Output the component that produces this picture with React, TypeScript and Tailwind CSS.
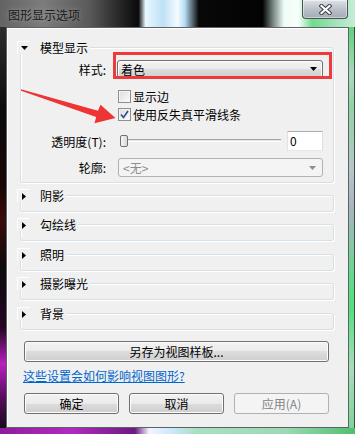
import React from 'react';

const btn =
  'flex items-center justify-center rounded-[3px] border border-[#707070] bg-[linear-gradient(#f2f2f2_0%,#ebebeb_50%,#dddddd_50%,#cfcfcf_100%)] shadow-[inset_0_0_0_1px_#fcfcfc] text-[12px] leading-[13px]';

const Tri = ({ open, color = '#000' }: { open: boolean; color?: string }) =>
  open ? (
    <svg width="7" height="4" viewBox="0 0 7 4">
      <polygon points="0,0 7,0 3.5,4" fill={color} />
    </svg>
  ) : (
    <svg width="4" height="7" viewBox="0 0 4 7">
      <polygon points="0,0 4,3.5 0,7" fill={color} />
    </svg>
  );

const Section = ({
  title,
  open = false,
  children,
  className = '',
}: {
  title: string;
  open?: boolean;
  children?: React.ReactNode;
  className?: string;
}) => (
  <div className={`flex flex-col ${className}`}>
    <div className="relative z-10 flex h-[13px] items-center self-start bg-[#f0f0f0] pr-[2px]">
      <div className="flex h-[13px] w-[13px] items-center justify-center border-l border-t border-white">
        <Tri open={open} />
      </div>
      <span className="ml-[10px] text-[12px] leading-[13px]">{title}</span>
    </div>
    <div
      className={`relative ml-[3px] -mt-[7px] rounded-[3px] border border-[#d5dfe5] shadow-[inset_1px_1px_0_#fff,1px_1px_0_#fff] ${
        open ? '' : 'h-[17px]'
      }`}
    >
      {children}
    </div>
  </div>
);

const Check = ({ checked }: { checked?: boolean }) => (
  <div className="flex h-[13px] w-[13px] items-center justify-center border border-[#8e8f8f] bg-[linear-gradient(135deg,#dcdcdc,#fdfdfd)] shadow-[inset_0_0_0_1px_#f4f4f4]">
    {checked && (
      <svg width="9" height="9" viewBox="0 0 9 9">
        <path d="M1 4.5 L3.5 7.5 L8 1" fill="none" stroke="#2b4a8f" strokeWidth="1.6" />
      </svg>
    )}
  </div>
);

const Label = ({ children }: { children: React.ReactNode }) => (
  <div className="w-[85px] shrink-0 text-right text-[12px] leading-[13px]">{children}</div>
);

export default function App() {
  return (
    <div className="relative flex h-[434px] w-[355px] flex-col overflow-hidden text-black [font-family:'Noto_Sans_CJK_SC','Noto_Sans',sans-serif]">
      {/* title bar */}
      <div className="flex h-[27px] shrink-0 items-start justify-between bg-[linear-gradient(90deg,#636363_0%,#7c7c7c_12%,#5a5a5a_25%,#1a1a1a_36%,#0a0a0a_39%,#e8f8ff_41%,#bfe0f5_46%,#f4fbff_50%,#b8def5_52%,#080808_56%,#030303_74%,#7a8a85_77%,#eefcf6_80%,#f8fffb_84%,#70dc8a_88%,#a7e3bd_95%,#c6eed6_100%)]">
        <span className="ml-[8px] mt-[8px] text-[12px] leading-[13px] text-[#1b1b1b] [text-shadow:0_0_5px_rgba(255,255,255,0.35)]">
          图形显示选项
        </span>
        <div className="mr-[7px] flex h-[19px] w-[46px] items-center justify-center rounded-b-[4px] border border-t-0 border-[#4d5157] bg-[linear-gradient(#dfe3e8,#bac1c9_50%,#a3abb5_100%)] shadow-[inset_0_0_0_1px_rgba(255,255,255,0.45)]">
          <svg width="13" height="11" viewBox="0 0 13 11">
            <path d="M2.5 2 L10.5 9 M10.5 2 L2.5 9" stroke="#3a3f46" strokeWidth="4.2" strokeLinecap="square" />
            <path d="M2.5 2 L10.5 9 M10.5 2 L2.5 9" stroke="#fff" strokeWidth="2.2" strokeLinecap="square" />
          </svg>
        </div>
      </div>

      <div className="flex flex-1">
        <div className="w-[6px] bg-[linear-gradient(180deg,#2e2e2e_0%,#0b0b0b_20%,#1a0505_40%,#3b0a0a_48%,#0b0b0b_60%,#250525_75%,#b81fc0_84%,#5a0e60_92%,#1a0a1a_100%)]" />

        {/* client area */}
        <div className="flex w-[343px] flex-col border border-[#5e6166] bg-[#f0f0f0] pt-[13px] shadow-[inset_1px_1px_0_#fff]">
          <div className="flex flex-col pl-[10px] pr-[14px]">
            <Section title="模型显示" open>
              <div className="flex flex-col pb-[5px] pr-[10px]">
                <div className="mt-[12px] flex h-[18px] items-center">
                  <Label>样式:</Label>
                  <div className={`ml-[11px] h-[18px] w-[206px] justify-between! pl-[3px] pr-[5px] ${btn}`}>
                    <span>着色</span>
                    <Tri open />
                  </div>
                </div>
                <div className="mt-[12px] flex h-[13px] items-center">
                  <div className="w-[85px]" />
                  <div className="ml-[12px]">
                    <Check />
                  </div>
                  <span className="ml-[2px] text-[12px] leading-[13px]">显示边</span>
                </div>
                <div className="mt-[5px] flex h-[13px] items-center">
                  <div className="w-[85px]" />
                  <div className="ml-[12px]">
                    <Check checked />
                  </div>
                  <span className="ml-[2px] text-[12px] leading-[13px]">使用反失真平滑线条</span>
                </div>
                <div className="mt-[10px] flex h-[20px] items-center">
                  <Label>透明度(T):</Label>
                  <div className="relative ml-[12px] h-[20px] w-[165px]">
                    <div className="absolute left-[2px] top-[8px] h-[3px] w-[161px] border-b border-t border-b-white border-t-[#a6a6a6] bg-[#e6e6e6]" />
                    <div className="absolute left-[2px] top-[4px] h-[12px] w-[8px] rounded-[2px] border border-[#707070] bg-[linear-gradient(90deg,#f6f6f6,#d8d8d8)]" />
                  </div>
                  <div className="ml-[4px] flex h-[20px] w-[36px] items-center border border-[#abadb3] border-l-[#e2e3ea] border-r-[#dbdfe6] border-b-[#e3e9ef] bg-white pl-[2px] text-[12px]">
                    0
                  </div>
                </div>
                <div className="mt-[7px] flex h-[19px] items-center">
                  <Label>轮廓:</Label>
                  <div className="ml-[12px] flex h-[19px] w-[205px] items-center justify-between rounded-[3px] border border-[#adb2b5] bg-[#f4f4f4] pl-[4px] pr-[6px] text-[12px] leading-[13px] text-[#8d8d8d]">
                    <span>&lt;无&gt;</span>
                    <Tri open color="#8d8d8d" />
                  </div>
                </div>
              </div>
              <div className="absolute left-[92px] top-[4px] h-[27px] w-[219px] border-[3px] border-[#ee3a3a]" />
            </Section>
            <Section title="阴影" className="mt-[6px]" />
            <Section title="勾绘线" className="mt-[6px]" />
            <Section title="照明" className="mt-[7px]" />
            <Section title="摄影曝光" className="mt-[6px]" />
            <Section title="背景" className="mt-[7px]" />
          </div>

          <div className={`ml-[17px] mt-[11px] h-[21px] w-[305px] ${btn}`}>另存为视图样板...</div>
          <div className="ml-[16px] mt-[7px] h-[14px] self-start text-[12px] leading-[14px] text-[#0066cc] underline">
            这些设置会如何影响视图图形?
          </div>
          <div className="ml-[17px] mt-[10px] flex gap-[10px]">
            <div className={`h-[21px] w-[95px] ${btn}`}>确定</div>
            <div className={`h-[21px] w-[95px] ${btn}`}>取消</div>
            <div className="flex h-[21px] w-[95px] items-center justify-center rounded-[3px] border border-[#adb2b5] bg-[#f4f4f4] text-[12px] leading-[13px] text-[#838383]">
              应用(A)
            </div>
          </div>
        </div>

        <div className="w-[6px] border-r border-[#3d4a44] bg-[linear-gradient(180deg,#5ed277_0%,#a9d9be_12%,#8fd4a3_20%,#b5c7c8_35%,#a9b4c0_45%,#67d98a_62%,#52e07b_70%,#a8dcbb_85%,#7fd49a_100%)]" />
      </div>

      <div className="h-[6px] shrink-0 bg-[linear-gradient(90deg,#8e1c9c_0%,#b12bc0_20%,#6b1a80_38%,#f2f6ff_42%,#cfe8ff_48%,#a9e0c4_55%,#9cd9b3_80%,#4fbf70_100%)]" />

      {/* annotation arrow */}
      <svg className="pointer-events-none absolute inset-0" width="355" height="434" viewBox="0 0 355 434">
        <polygon
          points="21,89.3 98,110.8 100.5,104.8 115.5,118 94.5,123.2 96.2,117 21,90.7"
          fill="#ee3434"
        />
      </svg>
    </div>
  );
}
